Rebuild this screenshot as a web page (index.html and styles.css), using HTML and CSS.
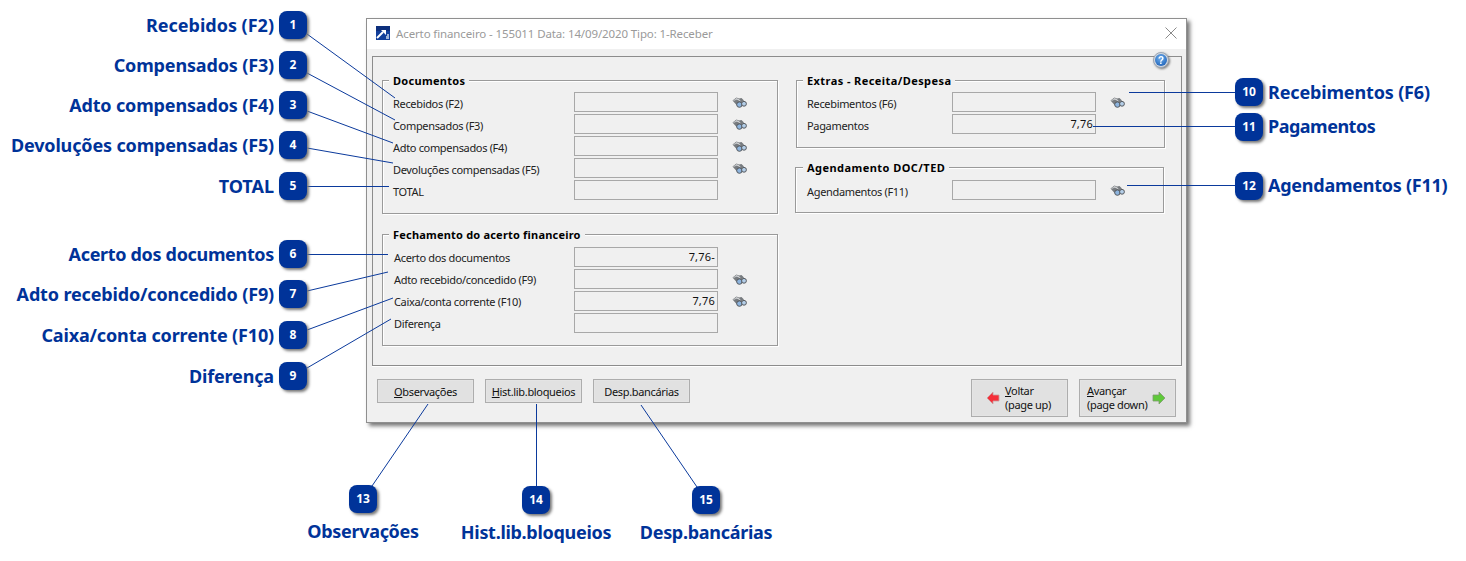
FILE: index.html
```html
<!DOCTYPE html>
<html lang="pt">
<head>
<meta charset="utf-8">
<title>Acerto financeiro</title>
<link rel="stylesheet" href="styles.css">
</head>
<body>
<svg width="0" height="0" class="defs">
  <defs>
    <symbol id="bino" viewBox="0 0 15 11">
      <path d="M.5 3.500 4.500.5 7 1.500 9.500 1 12 3.500 9 6 5 8.500Z" fill="#777b7f"/>
      <path d="M1.500 3.500 5 2 8.500 4M4 1.500 7.500 3" stroke="#d4d6d8" stroke-width=".9" fill="none"/>
      <circle cx="7.400" cy="7.600" r="2.700" fill="#8db4de" stroke="#55595e" stroke-width="1"/>
      <circle cx="12" cy="6.800" r="2.400" fill="#b4cee8" stroke="#55595e" stroke-width="1"/>
    </symbol>
    <radialGradient id="globe" cx=".45" cy=".35" r=".7">
      <stop offset="0" stop-color="#6fb0ee"/>
      <stop offset="1" stop-color="#1f62b8"/>
    </radialGradient>
  </defs>
</svg>

<main class="window">
  <header class="titlebar">
    <svg class="appicon" width="14" height="14" viewBox="0 0 14 14">
      <rect width="14" height="14" fill="#123f9a"/>
      <rect y="0" width="14" height="5" fill="#0d2f7c"/>
      <path d="M1 12 7 6" stroke="#fff" stroke-width="2"/>
      <path d="M5 4h5v5Z" fill="#fff"/>
      <path d="M10 13v-3h1v-2h2v5Z" fill="#9fb4d8"/>
    </svg>
    <span class="title">Acerto financeiro - 155011 Data: 14/09/2020 Tipo: 1-Receber</span>
    <svg class="close" width="12" height="12" viewBox="0 0 12 12"><path d="M.5.5l11 11M11.500.5l-11 11" stroke="#8a8a8a" fill="none"/></svg>
  </header>

  <div class="content">
    <section class="panel">
      <svg class="help" width="16" height="16" viewBox="0 0 16 16">
        <circle cx="8" cy="8" r="7.500" fill="#d3d8df" stroke="#9aa6b5"/>
        <circle cx="8" cy="8" r="6" fill="url(#globe)"/>
        <text x="8" y="11.500" text-anchor="middle" class="help-q">?</text>
      </svg>
      <div class="col">
        <div class="group g-doc">
          <span class="legend">Documentos</span>
          <div class="row"><label>Recebidos (F2)</label><div class="field"></div><svg class="bino"><use href="#bino"/></svg></div>
          <div class="row"><label>Compensados (F3)</label><div class="field"></div><svg class="bino"><use href="#bino"/></svg></div>
          <div class="row"><label>Adto compensados (F4)</label><div class="field"></div><svg class="bino"><use href="#bino"/></svg></div>
          <div class="row"><label>Devoluções compensadas (F5)</label><div class="field"></div><svg class="bino"><use href="#bino"/></svg></div>
          <div class="row"><label>TOTAL</label><div class="field"></div></div>
        </div>
        <div class="group g-fech">
          <span class="legend">Fechamento do acerto financeiro</span>
          <div class="row"><label>Acerto dos documentos</label><div class="field">7,76-</div></div>
          <div class="row"><label>Adto recebido/concedido (F9)</label><div class="field"></div><svg class="bino"><use href="#bino"/></svg></div>
          <div class="row"><label>Caixa/conta corrente (F10)</label><div class="field">7,76</div><svg class="bino"><use href="#bino"/></svg></div>
          <div class="row"><label>Diferença</label><div class="field"></div></div>
        </div>
      </div>
      <div class="col col-right">
        <div class="group g-ext">
          <span class="legend">Extras - Receita/Despesa</span>
          <div class="row"><label>Recebimentos (F6)</label><div class="field"></div><svg class="bino"><use href="#bino"/></svg></div>
          <div class="row"><label>Pagamentos</label><div class="field">7,76</div></div>
        </div>
        <div class="group g-age">
          <span class="legend">Agendamento DOC/TED</span>
          <div class="row"><label>Agendamentos (F11)</label><div class="field"></div><svg class="bino"><use href="#bino"/></svg></div>
        </div>
      </div>
    </section>

    <footer class="actions">
      <button class="btn"><span><u>O</u>bservações</span></button>
      <button class="btn"><span><u>H</u>ist.lib.bloqueios</span></button>
      <button class="btn"><span>Desp.bancárias</span></button>
      <div class="spacer"></div>
      <button class="btn nav nav-back">
        <svg width="14" height="14" viewBox="0 0 14 14"><path d="M7 1 1 7l6 6V10h6V4H7Z" fill="#f5303a" stroke="#c9a0a0" stroke-width=".8"/></svg>
        <span class="navtext"><u>V</u>oltar<br>(page up)</span>
      </button>
      <button class="btn nav nav-next">
        <span class="navtext"><u>A</u>vançar<br>(page down)</span>
        <svg width="14" height="14" viewBox="0 0 14 14"><path d="M7 1l6 6-6 6V10H1V4h6Z" fill="#5fc93a" stroke="#7d9a70" stroke-width=".8"/></svg>
      </button>
    </footer>
  </div>
</main>

<svg class="leaders" width="1466" height="561" viewBox="0 0 1466 561">
  <path d="M307 34 395 98M307 73 395 120M307 111 393 143M307 148 393 163M307 186.500H389M307 254.500H388M307 291 388 272M307 330 393 298M307 368 391 319M1129 92.500H1235M1093 126.500H1235M1127 185.500H1235M428 404 372 486M536.500 404V486M641 405 697 487"/>
</svg>

<div class="callout left c1"><span class="label">Recebidos (F2)</span><span class="badge">1</span></div>
<div class="callout left c2"><span class="label">Compensados (F3)</span><span class="badge">2</span></div>
<div class="callout left c3"><span class="label">Adto compensados (F4)</span><span class="badge">3</span></div>
<div class="callout left c4"><span class="label">Devoluções compensadas (F5)</span><span class="badge">4</span></div>
<div class="callout left c5"><span class="label">TOTAL</span><span class="badge">5</span></div>
<div class="callout left c6"><span class="label">Acerto dos documentos</span><span class="badge">6</span></div>
<div class="callout left c7"><span class="label">Adto recebido/concedido (F9)</span><span class="badge">7</span></div>
<div class="callout left c8"><span class="label">Caixa/conta corrente (F10)</span><span class="badge">8</span></div>
<div class="callout left c9"><span class="label">Diferença</span><span class="badge">9</span></div>
<div class="callout right c10"><span class="badge">10</span><span class="label">Recebimentos (F6)</span></div>
<div class="callout right c11"><span class="badge">11</span><span class="label">Pagamentos</span></div>
<div class="callout right c12"><span class="badge">12</span><span class="label">Agendamentos (F11)</span></div>
<div class="callout bottom c13"><span class="badge">13</span><span class="label">Observações</span></div>
<div class="callout bottom c14"><span class="badge">14</span><span class="label">Hist.lib.bloqueios</span></div>
<div class="callout bottom c15"><span class="badge">15</span><span class="label">Desp.bancárias</span></div>
</body>
</html>
```
FILE: styles.css
```css
* { box-sizing: border-box; }
html, body { margin: 0; height: 561px; overflow: hidden; }
body { position: relative; background: #fff; font-family: "Noto Sans", "DejaVu Sans", sans-serif; font-size: 11px; letter-spacing: -.33px; color: #111; }
.defs { position: absolute; }

/* application window: free-floating over the annotated canvas */
.window { position: absolute; left: 366px; top: 18px; width: 821px; height: 405px; background: #f0f0f0; border: 1px solid #8f8f8f; box-shadow: 3px 3px 4px #777; display: flex; flex-direction: column; }
.titlebar { height: 30px; background: #fff; display: flex; align-items: center; padding: 0 9px 2px 9px; flex: none; }
.appicon { flex: none; margin-right: 6px; }
.title { font-size: 11.500px; letter-spacing: -.12px; color: #9a9a9a; flex: 1; }
.close { flex: none; }
.content { flex: 1; display: flex; flex-direction: column; padding: 7px 4px 0 5px; }

.panel { position: relative; height: 310px; border: 1px solid #8c8c8c; box-shadow: 0 1px 0 #fff; display: grid; grid-template-columns: 396px 369px; column-gap: 18px; padding: 23px 0 0 9px; flex: none; }
.help { position: absolute; right: 12px; top: -5px; filter: drop-shadow(1px 1px 1px #777); }
.help-q { font: bold 10px "Liberation Sans", sans-serif; fill: #fff; }
.col { display: flex; flex-direction: column; }
.group { position: relative; border: 1px solid #9a9a9a; box-shadow: 1px 1px 0 #fff, inset 1px 1px 0 #fff; padding: 11px 0 0 10px; display: flex; flex-direction: column; gap: 2px; }
.g-doc { height: 134px; }
.g-fech { height: 112px; margin-top: 20px; padding-top: 12px; }
.g-ext { height: 68px; }
.g-age { height: 46px; margin-top: 19px; margin-left: -1px; width: 369px; padding: 12px 0 0 11px; }
.legend { position: absolute; left: 6px; top: -8px; background: #f0f0f0; padding: 0 4px; font-weight: 700; font-size: 11px; letter-spacing: .3px; line-height: 15px; color: #000; }
.g-fech .legend { letter-spacing: .2px; }
.g-ext .legend { letter-spacing: .42px; }
.g-age .legend { left: 7px; letter-spacing: .45px; }

.row { display: flex; align-items: center; height: 20px; }
.row label { width: 181px; flex: none; color: #222; padding-top: 2px; }
.col-right .row label { width: 145px; }
.g-fech .row label { padding-left: 1px; padding-top: 0; }
.g-doc .row + .row label { padding-top: 3px; }
.field { width: 144px; height: 20px; border: 1px solid #a8a8a8; background: #f0f0f0; text-align: right; padding-right: 2px; line-height: 18px; flex: none; color: #111; letter-spacing: .2px; }
.bino { width: 15px; height: 11px; margin-left: 14px; flex: none; }

.actions { flex: 1; display: flex; align-items: flex-start; gap: 11px; padding: 13px 6px 0 5px; }
.spacer { flex: 1; }
.btn { width: 97px; height: 24px; background: #e1e1e1; border: 1px solid #adadad; box-shadow: inset 0 0 0 1px #e4e4e4; font: inherit; letter-spacing: inherit; color: #111; padding: 0; display: flex; align-items: center; justify-content: center; }
.nav { height: 38px; }
.nav-back { justify-content: flex-start; gap: 5px; padding-left: 14px; }
.nav-next { justify-content: space-between; padding: 0 9px 0 7px; }
.navtext { text-align: left; line-height: 14px; }

/* annotation layer */
.leaders { position: absolute; left: 0; top: 0; pointer-events: none; }
.leaders path { stroke: #0b3a9c; stroke-width: 1; fill: none; }
.callout { position: absolute; display: flex; align-items: center; }
.left { left: 0; width: 307px; justify-content: flex-end; gap: 5px; }
.right { left: 1235px; gap: 5px; }
.bottom { flex-direction: column; width: 200px; }
.label { font-size: 18px; font-weight: 700; letter-spacing: -.15px; color: #003399; white-space: nowrap; line-height: 28px; }
.badge { width: 28px; height: 28px; flex: none; border-radius: 8px; background: #003399; color: #fff; font: 700 12px/28px "Noto Sans", sans-serif; letter-spacing: 0; text-align: center; box-shadow: 2px 2px 3px #777; }
.bottom .label { margin-top: 4px; letter-spacing: -.3px; }

.c1 { top: 11px; } .c2 { top: 51px; } .c3 { top: 91px; } .c4 { top: 131px; } .c5 { top: 172px; }
.c6 { top: 240px; } .c7 { top: 280px; } .c8 { top: 321px; } .c9 { top: 362px; }
.c10 { top: 78px; } .c11 { top: 113px; } .c12 { top: 172px; }
.c13 { top: 485px; left: 263px; } .c14 { top: 486px; left: 436px; } .c15 { top: 486px; left: 606px; }
.c1 .label, .c5 .label { letter-spacing: 0; }
.c6 .label { letter-spacing: -.33px; }
.c11 .label { letter-spacing: -.5px; margin-top: -2px; }
.c12 .label { letter-spacing: -.25px; margin-top: -2px; }
```
